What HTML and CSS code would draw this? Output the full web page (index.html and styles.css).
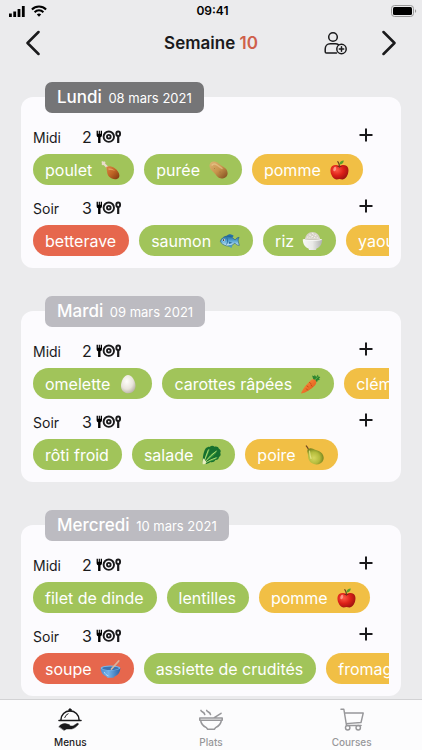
FILE: index.html
```html
<!DOCTYPE html>
<html lang="fr">
<head>
    <meta charset="UTF-8">
    <meta name="viewport" content="width=device-width, initial-scale=1.0">
    <title>Menus de la semaine</title>
    <link rel="stylesheet" href="styles.css">
</head>
<body>
    <!-- Shared drawings -->
    <svg class="sprite" aria-hidden="true">
        <defs>
            <linearGradient id="g-meat" x1="0" y1="0" x2="1" y2="1">
                <stop offset="0" stop-color="#d98a48"/><stop offset=".5" stop-color="#bf6425"/><stop offset="1" stop-color="#7a360f"/>
            </linearGradient>
            <linearGradient id="g-potato" x1="0" y1="0" x2="1" y2="1">
                <stop offset="0" stop-color="#dfb574"/><stop offset=".5" stop-color="#c8934c"/><stop offset="1" stop-color="#7d4b1d"/>
            </linearGradient>
            <radialGradient id="g-apple" cx=".35" cy=".35" r=".75">
                <stop offset="0" stop-color="#ff5a45"/><stop offset=".5" stop-color="#dc2018"/><stop offset="1" stop-color="#95100f"/>
            </radialGradient>
            <linearGradient id="g-fish" x1="0" y1="0" x2="0" y2="1">
                <stop offset="0" stop-color="#246a9e"/><stop offset=".5" stop-color="#5ba9d6"/><stop offset="1" stop-color="#d6edf6"/>
            </linearGradient>
            <linearGradient id="g-rice" x1="0" y1="0" x2="1" y2="0">
                <stop offset="0" stop-color="#f8f8f6"/><stop offset=".5" stop-color="#e9e9e7"/><stop offset="1" stop-color="#aeb0ae"/>
            </linearGradient>
            <radialGradient id="g-egg" cx=".4" cy=".35" r=".7">
                <stop offset="0" stop-color="#fffefa"/><stop offset=".6" stop-color="#e9e5dc"/><stop offset="1" stop-color="#b9b2a6"/>
            </radialGradient>
            <linearGradient id="g-carrot" x1="0" y1="0" x2="1" y2="1">
                <stop offset="0" stop-color="#ff9b45"/><stop offset="1" stop-color="#d94b12"/>
            </linearGradient>
            <radialGradient id="g-pear" cx=".4" cy=".6" r=".6">
                <stop offset="0" stop-color="#d6d75e"/><stop offset=".6" stop-color="#b3bb3c"/><stop offset="1" stop-color="#78851f"/>
            </radialGradient>
            <linearGradient id="g-bowl" x1="0" y1="0" x2="1" y2="0">
                <stop offset="0" stop-color="#4d8fd2"/><stop offset=".4" stop-color="#73b2ea"/><stop offset="1" stop-color="#2b62a7"/>
            </linearGradient>
        </defs>
        <symbol id="drumstick" viewBox="0 0 20 20">
            <path d="M1.200 1.600c.6-.7 1.500-.5 2 .2.700-.6 1.700-.2 1.700.7 0 .4-.1.700-.3 1L8 6.800 6.300 8.500 3.200 5c-.8.4-1.700.2-2-.5-.2-.5 0-1.100.4-1.400-.6-.3-.8-1-.4-1.500z" fill="#e9dccb"/>
            <path d="M5.600 7C7.500 5.700 11 5.900 14.200 8.200c3.500 2.500 5.600 6.200 4.300 9-1.600 3-6.900 2.600-9.800-.4C6 13.900 6.900 10.800 5.600 7z" fill="url(#g-meat)"/>
            <path d="M7.800 8.300c2.300-.4 5.200.8 7 2.800-2.200-.9-4.500-1.500-6.700-.8z" fill="#edac6b" opacity=".7"/>
        </symbol>
        <symbol id="potato" viewBox="0 0 20 20">
            <path d="M1 5.500C1.200 2.600 4 .8 7 1.700c3 .8 4.200 3 6.600 4.300 3.200 1.700 5.700 4.100 5.500 7.500-.2 3.500-3.600 5.600-7 4.800-3.300-.7-4.500-3.700-6.600-5.600C3.200 10.600.8 8.500 1 5.500z" fill="url(#g-potato)"/>
            <path d="M3.600 5.200c.8-1.600 3-1.700 4.600-.4 1.500 1.300 3.600 2.200 5.300 3.700" fill="none" stroke="#f1d39d" stroke-width="1.500" stroke-linecap="round" opacity=".5"/>
            <circle cx="6" cy="8.500" r=".4" fill="#8c5c2c"/><circle cx="11.500" cy="12" r=".4" fill="#8c5c2c"/>
        </symbol>
        <symbol id="apple" viewBox="0 0 20 20">
            <path d="M10 6.200C11.900 4.700 15 4.300 17.200 6c2.300 1.900 2.100 5.700 1 8.600-1.100 2.800-3.200 5.200-5.400 5-1.100-.1-1.700-.5-2.800-.5s-1.700.4-2.800.5c-2.200.2-4.300-2.200-5.400-5C.7 11.700.5 7.900 2.800 6 5 4.300 8.100 4.700 10 6.200z" fill="url(#g-apple)"/>
            <path d="M7.200 6.300c1.600 1.100 4 1.100 5.600 0-1.400-.9-4.200-.9-5.600 0z" fill="#8c1510"/>
            <path d="M10 7C10 4.500 9.500 3 8.300 1.600" fill="none" stroke="#65401e" stroke-width="1.200" stroke-linecap="round"/>
            <path d="M9.900 4.600C10 2.200 11.800.6 14.300.6c-.2 2.500-1.900 4-4.400 4z" fill="#5aa02c"/>
            <ellipse cx="5.300" cy="9" rx="1.400" ry="2.300" fill="#ffb0a0" opacity=".75" transform="rotate(20 5.300 9)"/>
        </symbol>
        <symbol id="fish" viewBox="0 0 20 20">
            <path d="M7 5.300c2-2.600 4.800-2.500 7.200-.5L13 6.600z" fill="#2470a8"/>
            <path d="M.8 10.200C2.200 6.700 5.600 4.600 9.300 5.200c2.600.4 4.600 2.200 6.300 3.800 1.300-1.900 2.500-2.700 4-2.600-.8 1.500-1 2.800-.8 4 .2 1.300.6 2.600 1 4-1.800 0-3.400-.9-4.500-2.300-2.700 2.500-5.500 3.500-8.500 2.700C3.800 14 1.600 12.400.8 10.200z" fill="url(#g-fish)" stroke="#225b8a" stroke-width=".6"/>
            <path d="M7.200 6.500c1.300 2.300 1.200 4.900-.3 7.100" fill="none" stroke="#24679a" stroke-width=".8"/>
            <path d="M9.200 10.500l3.800 1.300-3.300 1.300z" fill="#286e9f"/>
            <path d="M8 14.500l4 2.400 1-3z" fill="#4c9ac5"/>
            <circle cx="4.300" cy="9.100" r="1.300" fill="#fff"/><circle cx="4.200" cy="9.100" r=".8" fill="#111"/>
        </symbol>
        <symbol id="rice" viewBox="0 0 20 20">
            <path d="M2.500 8C3 4 6 1 10 1s7 3 7.500 7z" fill="#d7d2c8"/>
            <path d="M4.500 6.500l1-.8M7 4l1.200.2M10 2.500l1 .6M12.500 4.500l1-.4M14.500 6.500l.8.700M9 6l1.200-.5M6.500 7h1M11.500 7l1-.6" stroke="#f8f5ef" stroke-width="1" stroke-linecap="round"/>
            <path d="M.3 8.600h19.400c0 4.400-2.200 7.700-5.700 9l-.5 1.500h-7L6 17.600c-3.500-1.300-5.700-4.600-5.700-9z" fill="url(#g-rice)"/>
            <ellipse cx="10" cy="8.600" rx="9.700" ry="1.200" fill="#f9f9f7"/>
            <ellipse cx="10" cy="8.200" rx="8" ry=".8" fill="#cfcac0"/>
        </symbol>
        <symbol id="egg" viewBox="0 0 20 20">
            <path d="M9.500 1c4 0 7.200 5.500 7.500 10.500.2 4.500-3 7.700-7.200 7.700-4.300 0-7.300-3-7.300-7.300C2.500 6.900 5.700 1 9.500 1z" fill="url(#g-egg)"/>
        </symbol>
        <symbol id="carrot" viewBox="0 0 20 20">
            <path d="M13.200 6.400L11.600 1.600l2.200.7.400-1.500 1.500 2.100L17.500.5l.4 2.100 1.900.3-1.300 1.800.9 1.200-2.200.4-.6 1.600z" fill="#2d8531"/>
            <path d="M14.300 6l3.500-3.600" stroke="#6db844" stroke-width="1"/>
            <path d="M10 6.500c1.500-1.700 3.600-1.700 4.900-.4 1.400 1.400 1.300 3.400-.3 5.100C10.500 15.400 5.600 18.500 1 19.500.700 19.300.6 19 .7 18.700 2.700 14.300 6 10.300 10 6.500z" fill="url(#g-carrot)"/>
            <path d="M9 8.500l1.700 1.300M6.500 12l1.200.8M11.500 12.200l-1-1.200M7 16l-1.100-1.200" stroke="#b83c0c" stroke-width=".7" stroke-linecap="round"/>
        </symbol>
        <symbol id="greens" viewBox="0 0 20 20">
            <path d="M1.600 19C.8 15 1.500 7 4.300 3.300 5.500 1.600 7.700 2.200 8.700 1.400c1.500-1 3.300-.7 4.300.4 1.700-.9 4 .1 4.400 1.900 1.800.7 2.300 2.700 1.300 4.100 1 1.700.3 3.500-1.200 4.200-.2 2-1.700 3.200-3.600 3-1.100 1.900-3 2.600-5 2-2.300 1.700-4.500 2.300-7.300 2z" fill="#16702f"/>
            <path d="M3 16C3.400 11 5 6.500 8.500 3.500 7.400 7.800 5.500 12 3 16zM5 15.500C8 10 11.500 7 16 5.500 13.800 9.600 10 13 5 15.500zM6.500 16.400c3.300-1.700 6.500-3.700 10-4.500-2.200 3-5.600 4.400-10 4.500z" fill="#3d9d3e"/>
            <path d="M1.900 18.500L5 10l2-5.500M2 18.500L9 11l6-5M2.200 18.800l7.300-4 5.500-2.100" fill="none" stroke="#bee078" stroke-width=".9"/>
            <path d="M1.300 19.300c-.6-2.600 0-4.200.8-6l2.600 3.500-.7 2.300z" fill="#e9efc1"/>
        </symbol>
        <symbol id="pear" viewBox="0 0 20 20">
            <path d="M4 4.500C3.500 3 2.700 1.800 1.800 1" fill="none" stroke="#704922" stroke-width="1.200" stroke-linecap="round"/>
            <path d="M2.900 5.400C3.500 3.300 6 2.600 8.500 3.800c2.200 1.100 3.700 1.300 5.800 2.300 3.600 1.700 5.800 5.200 4.500 8.800-1.500 4.300-7.500 5.900-11.600 3.100-3.200-2.200-3.600-5.200-3.700-8.300-.1-1.700-1-2.700-.6-4.300z" fill="url(#g-pear)"/>
            <path d="M5 6.200c.4 2.800.5 5.300 1.500 7.200" fill="none" stroke="#edf09b" stroke-width="1.200" stroke-linecap="round" opacity=".7"/>
        </symbol>
        <symbol id="bowl" viewBox="0 0 20 20">
            <path d="M.2 9h19.600c0 4.200-2.500 7.400-5.800 8.500-.2.900-1 1.200-2 1.200H8c-1 0-1.800-.3-2-1.200C2.700 16.400.2 13.200.2 9z" fill="url(#g-bowl)"/>
            <ellipse cx="10" cy="9" rx="9.800" ry="2.600" fill="#79b8ec"/>
            <ellipse cx="10" cy="9.300" rx="8.300" ry="1.800" fill="#3d73b0"/>
            <path d="M11 10L18.200 2" stroke="#d9b49c" stroke-width="1.800" stroke-linecap="round"/>
            <path d="M4 13.500c.7 1.600 1.900 2.600 3.500 3.200" fill="none" stroke="#b3daf7" stroke-width="1" stroke-linecap="round"/>
        </symbol>
        <symbol id="cutlery" viewBox="0 0 26 14">
            <path d="M.6.800h1.300v3h.8v-3h1.200v3h.8v-3H6V5c0 1.200-.6 2-1.500 2.200V13H2.100V7.200C1.200 7 .6 6.200.6 5z"/>
            <circle cx="12.800" cy="6.700" r="5.200" fill="none" stroke="currentColor" stroke-width="1.900"/>
            <circle cx="12.800" cy="6.700" r="1.800" fill="none" stroke="currentColor" stroke-width="1.900"/>
            <ellipse cx="22.200" cy="3.800" rx="1.900" ry="2.300" fill="none" stroke="currentColor" stroke-width="1.900"/>
            <path d="M22.200 6v7" stroke="currentColor" stroke-width="2.200"/>
        </symbol>
        <symbol id="plus" viewBox="0 0 14 14">
            <path d="M7 .5v13M.5 7h13" stroke="currentColor" stroke-width="2"/>
        </symbol>
    </svg>

    <div class="app">
        <div class="status">
            <div class="signal">
                <svg width="18" height="12" viewBox="0 0 18 12"><path d="M1 8.500h2.800V12H1zM5.300 6.500h2.800V12H5.300zM9.600 4h2.800v8H9.600zM13.900 1h2.800v11h-2.800z"/></svg>
                <svg width="16" height="12" viewBox="0 0 16 12" fill="none" stroke="currentColor" stroke-width="2"><path d="M.9 4.500a10 10 0 0 1 14.200 0M3.600 7.200a6.200 6.200 0 0 1 8.800 0"/><path d="M8 11.700L5.800 9.500a3.100 3.100 0 0 1 4.400 0z" fill="currentColor" stroke="none"/></svg>
            </div>
            <div class="time">09:41</div>
            <svg class="battery" width="26" height="12" viewBox="0 0 26 12"><rect x=".5" y=".5" width="22" height="11" rx="3" fill="none" stroke="#999"/><rect x="2" y="2" width="19" height="8" rx="1.500"/><path d="M24 4.200c1.600.4 1.600 3.200 0 3.600z" fill="#999"/></svg>
        </div>

        <header class="navbar">
            <button class="icon-button" aria-label="Semaine précédente">
                <svg width="14" height="26" viewBox="0 0 14 26"><path class="chevron" d="M12.500 2L1.500 13l11 11"/></svg>
            </button>
            <h1>Semaine <span>10</span></h1>
            <div class="actions">
                <button class="icon-button" aria-label="Inviter">
                    <svg width="24" height="24" viewBox="0 0 24 24" fill="none" stroke="currentColor" stroke-width="1.500" stroke-linecap="round"><circle cx="9" cy="6" r="4.300"/><path d="M12.500 22H2.500a1.300 1.300 0 0 1-1.300-1.300V18c0-3 2-5.200 5-5.200h5.300c1.200 0 2.100.3 2.900.9"/><circle cx="17.500" cy="18" r="4.700"/><path d="M17.500 15.800v4.400M15.300 18h4.400"/></svg>
                </button>
                <button class="icon-button" aria-label="Semaine suivante">
                    <svg width="14" height="26" viewBox="0 0 14 26"><path class="chevron" d="M1.500 2l11 11-11 11"/></svg>
                </button>
            </div>
        </header>

        <main class="days">
            <section class="day today">
                <h2>Lundi <small>08 mars 2021</small></h2>
                <div class="meal">
                    <h3>Midi</h3>
                    <div class="guests">2 <svg><use href="#cutlery"/></svg></div>
                    <button class="add" aria-label="Ajouter un plat"><svg><use href="#plus"/></svg></button>
                </div>
                <div class="dishes">
                    <button class="dish green">poulet <svg><use href="#drumstick"/></svg></button>
                    <button class="dish green">purée <svg><use href="#potato"/></svg></button>
                    <button class="dish yellow">pomme <svg><use href="#apple"/></svg></button>
                </div>
                <div class="meal">
                    <h3>Soir</h3>
                    <div class="guests">3 <svg><use href="#cutlery"/></svg></div>
                    <button class="add" aria-label="Ajouter un plat"><svg><use href="#plus"/></svg></button>
                </div>
                <div class="dishes">
                    <button class="dish red">betterave</button>
                    <button class="dish green">saumon <svg><use href="#fish"/></svg></button>
                    <button class="dish green">riz <svg><use href="#rice"/></svg></button>
                    <button class="dish yellow">yaourt</button>
                </div>
            </section>

            <section class="day">
                <h2>Mardi <small>09 mars 2021</small></h2>
                <div class="meal">
                    <h3>Midi</h3>
                    <div class="guests">2 <svg><use href="#cutlery"/></svg></div>
                    <button class="add" aria-label="Ajouter un plat"><svg><use href="#plus"/></svg></button>
                </div>
                <div class="dishes">
                    <button class="dish green">omelette <svg><use href="#egg"/></svg></button>
                    <button class="dish green">carottes râpées <svg><use href="#carrot"/></svg></button>
                    <button class="dish yellow">clémentine</button>
                </div>
                <div class="meal">
                    <h3>Soir</h3>
                    <div class="guests">3 <svg><use href="#cutlery"/></svg></div>
                    <button class="add" aria-label="Ajouter un plat"><svg><use href="#plus"/></svg></button>
                </div>
                <div class="dishes">
                    <button class="dish green">rôti froid</button>
                    <button class="dish green">salade <svg><use href="#greens"/></svg></button>
                    <button class="dish yellow">poire <svg><use href="#pear"/></svg></button>
                </div>
            </section>

            <section class="day">
                <h2>Mercredi <small>10 mars 2021</small></h2>
                <div class="meal">
                    <h3>Midi</h3>
                    <div class="guests">2 <svg><use href="#cutlery"/></svg></div>
                    <button class="add" aria-label="Ajouter un plat"><svg><use href="#plus"/></svg></button>
                </div>
                <div class="dishes">
                    <button class="dish green">filet de dinde</button>
                    <button class="dish green">lentilles</button>
                    <button class="dish yellow">pomme <svg><use href="#apple"/></svg></button>
                </div>
                <div class="meal">
                    <h3>Soir</h3>
                    <div class="guests">3 <svg><use href="#cutlery"/></svg></div>
                    <button class="add" aria-label="Ajouter un plat"><svg><use href="#plus"/></svg></button>
                </div>
                <div class="dishes">
                    <button class="dish red">soupe <svg><use href="#bowl"/></svg></button>
                    <button class="dish green">assiette de crudités</button>
                    <button class="dish yellow">fromage</button>
                </div>
            </section>
        </main>

        <nav class="tabs">
            <a href="#menus" class="active">
                <svg viewBox="0 0 26 24" fill="none" stroke="currentColor" stroke-width="1.600" stroke-linecap="round"><path d="M1.500 13h23M3.500 12.500a9.500 9.500 0 0 1 19 0"/><path d="M7.500 10a6 6 0 0 1 3.500-4" stroke-width="1"/><circle cx="13" cy="2" r="1.200" fill="currentColor" stroke-width="1"/><path d="M1.500 19.300c2.500-2.700 5-3.500 7.500-2.800l3 .8c1.400.4 1.300 1.500 0 1.600l4.200-.2 4-2.500c1.500-.6 2.200.5 1.200 1.400-2.400 2.500-4 3.800-6.600 4.300H9.500L7 23.200z" fill="currentColor" stroke-width=".5"/></svg>
                Menus
            </a>
            <a href="#plats">
                <svg viewBox="0 0 26 24" fill="none" stroke="currentColor" stroke-width="1.600" stroke-linecap="round" stroke-linejoin="round"><path d="M1.300 10.500h23.400v2.300H1.300zM2.200 13c.4 3.500 2.600 6 6 7.500l1.300 1.700h7l1.300-1.700c3.400-1.500 5.600-4 6-7.500M16 10.300l7.500-4.800M2.500 2.500C3.200 4.500 6 4 6.500 6.800M8.500 2.500c.7 2 3.500 1.500 4 4.300"/></svg>
                Plats
            </a>
            <a href="#courses">
                <svg viewBox="0 0 26 24" fill="none" stroke="currentColor" stroke-width="1.500" stroke-linecap="round" stroke-linejoin="round"><path d="M1.500 1.300h3l2.800 17h15.200M5.200 5.300h19.500l-2.300 9.800-15.500 1.200"/><circle cx="8.500" cy="20.600" r="2.300"/><circle cx="19.500" cy="20.600" r="2.300"/></svg>
                Courses
            </a>
        </nav>
    </div>
</body>
</html>
```
FILE: styles.css
```css
* {
    box-sizing: border-box;
}
body {
    margin: 0;
    background-color: #ebebed;
    color: #1a1a1c;
    font-family: Inter, "Liberation Sans", sans-serif;
}
button {
    margin: 0;
    padding: 0;
    border: none;
    background: none;
    color: inherit;
    font-family: inherit;
    cursor: pointer;
}
svg {
    display: block;
    flex: none;
}
h1, h2, h3 {
    margin: 0;
}
.sprite {
    position: absolute;
    width: 0;
    height: 0;
}
.app {
    display: flex;
    flex-direction: column;
    height: 100vh;
}

/* Status bar */
.status {
    display: grid;
    grid-template-columns: 1fr auto 1fr;
    align-items: center;
    height: 21px;
    padding: 0 5px 0 8px;
    color: #000;
}
.signal {
    display: flex;
    gap: 5px;
}
.time {
    font-size: 12px;
    font-weight: 600;
}
.battery {
    justify-self: end;
}

/* Week header */
.navbar {
    display: grid;
    grid-template-columns: 1fr auto 1fr;
    align-items: center;
    height: 44px;
    padding: 0 26px;
}
.navbar h1 {
    font-size: 17px;
    font-weight: 600;
}
.navbar h1 span {
    color: #cf604b;
}
.actions {
    display: flex;
    align-items: center;
    justify-content: flex-end;
    gap: 34px;
}
.icon-button {
    justify-self: start;
}
.chevron {
    fill: none;
    stroke: currentColor;
    stroke-width: 2.5;
    stroke-linecap: round;
    stroke-linejoin: round;
}

/* Days */
.days {
    flex: 1;
    display: flex;
    flex-direction: column;
    gap: 43px;
    min-height: 0;
    padding: 32px 21px 0;
    overflow: hidden;
}
.day {
    flex: none;
    padding: 0 12px 12px;
    border-radius: 12px;
    background-color: #fcfbfe;
}
.day h2 {
    width: fit-content;
    margin: -15px 0 1px 12px;
    padding: 0 12px;
    border-radius: 7px;
    background-color: #bcbbc1;
    color: #fff;
    font-size: 17px;
    font-weight: 500;
    line-height: 31px;
}
.day h2 small {
    margin-left: 2px;
    font-size: 13px;
    font-weight: 400;
    line-height: 1;
}
.today h2 {
    background-color: #757577;
}
.meal {
    display: flex;
    align-items: center;
    height: 40px;
    padding: 6px 16px 0 0;
}
.meal h3 {
    width: 49px;
    font-size: 14px;
    font-weight: 400;
}
.guests {
    display: flex;
    align-items: center;
    gap: 4px;
    font-size: 16px;
}
.guests svg {
    width: 26px;
    height: 14px;
}
.add {
    margin-left: auto;
    padding-bottom: 4px;
}
.add svg {
    width: 14px;
    height: 14px;
}
.dishes {
    display: flex;
    gap: 10px;
    overflow-x: auto;
    scrollbar-width: none;
}
.dish {
    display: flex;
    flex: none;
    align-items: center;
    gap: 8px;
    height: 31px;
    padding: 0 13px 0 12px;
    border-radius: 16px;
    color: #fff;
    font-size: 16px;
}
.dish svg {
    width: 21px;
    height: 20px;
}
.green {
    background-color: #a1c45a;
}
.yellow {
    background-color: #f1bf45;
}
.red {
    background-color: #e6674d;
}

/* Bottom tabs */
.tabs {
    display: grid;
    grid-template-columns: repeat(3, 1fr);
    height: 51px;
    border-top: 1px solid #d2d2d4;
    background-color: #fcfcfd;
}
.tabs a {
    display: flex;
    flex-direction: column;
    align-items: center;
    gap: 5px;
    padding-top: 8px;
    color: #97979a;
    font-size: 10px;
    font-weight: 500;
    line-height: 12px;
    text-decoration: none;
}
.tabs .active {
    color: #1a1a1c;
}
.tabs svg {
    width: 26px;
    height: 23px;
}
```
